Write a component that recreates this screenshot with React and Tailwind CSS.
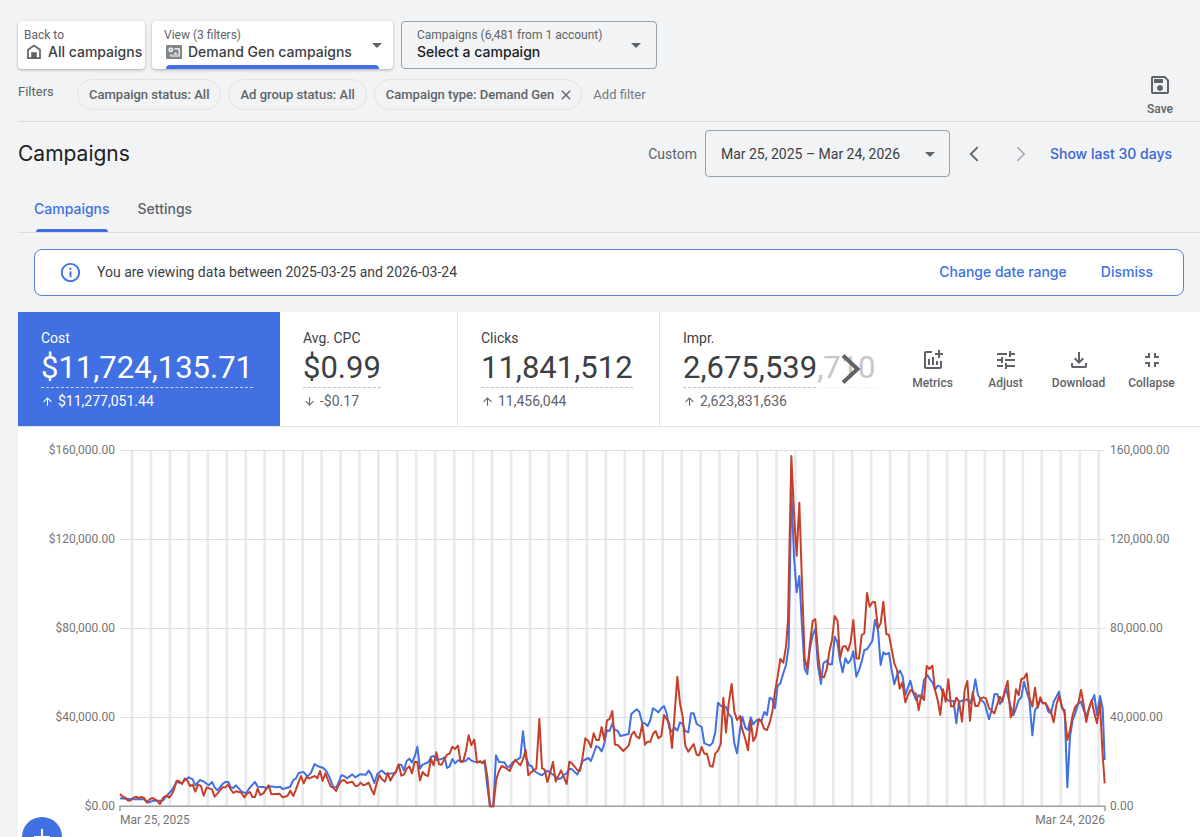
import {useState} from "react";
import {
    MdAddchart, MdArrowBackIosNew, MdArrowDownward, MdArrowDropDown, MdArrowForwardIos,
    MdArrowUpward, MdClose, MdFullscreenExit, MdInfoOutline, MdOutlineSave, MdTune
} from "react-icons/md";

const filters = [
    {label: "Campaign status: All", removable: false},
    {label: "Ad group status: All", removable: false},
    {label: "Campaign type: Demand Gen", removable: true},
];

const leftAxis = ["$160,000.00", "$120,000.00", "$80,000.00", "$40,000.00", "$0.00"];
const rightAxis = ["160,000.00", "120,000.00", "80,000.00", "40,000.00", "0.00"];

// plot space is 2955 x 1068, y grows downwards from the 160,000 line
const costLine = `0,1045 40,1048 72,1048 85,1058 100,1052 128,1052 140,1038 156,1020 170,996 185,1000 195,990 206,982 218,988 226,1006
240,990 252,995 266,1006 276,996 284,1012 292,1021 308,1002 316,996 325,996 332,1012 340,1014 348,1006 364,1024 378,1030 390,1012
405,996 413,1010 430,1011 440,1014 452,1009 470,1012 480,1010 488,1017 510,1011 520,990 528,985 536,969 551,966 562,980 572,970
584,942 592,948 610,954 620,965 630,985 640,1012 650,1011 664,976 672,978 681,985 697,973 706,982 720,973 738,974 746,962 754,974
763,999 772,972 780,965 786,962 796,972 820,970 828,965 836,944 844,944 852,961 860,933 868,926 876,937 884,920 892,890 900,956
908,944 926,936 933,920 941,918 950,930 965,927 974,922 981,954 989,949 997,927 1005,940 1014,931 1030,935 1038,932 1046,924
1054,932 1063,935 1088,937 1094,937 1102,1010 1110,1069 1120,1069 1128,916 1137,936 1153,937 1161,950 1169,950 1177,938 1193,928
1201,923 1209,844 1217,920 1227,946 1235,948 1242,963 1258,972 1266,976 1282,962 1300,975 1315,987 1323,985 1331,975 1340,970
1348,956 1356,958 1372,974 1380,955 1388,933 1405,924 1413,933 1429,888 1437,893 1445,904 1453,880 1461,840 1469,843 1477,820
1485,840 1493,842 1501,858 1526,852 1534,792 1550,778 1558,785 1567,820 1575,820 1583,828 1591,810 1599,775 1607,780 1615,787
1624,775 1632,768 1640,790 1648,835 1656,845 1664,833 1672,842 1680,817 1688,822 1696,843 1705,847 1713,790 1721,790 1730,822
1745,831 1753,880 1770,887 1778,878 1786,845 1794,758 1802,767 1818,771 1826,792 1835,802 1843,880 1851,910 1860,840 1867,800
1876,833 1884,840 1892,802 1900,823 1910,810 1924,814 1933,786 1941,795 1949,743 1957,748 1965,775 1973,707 1981,700 1990,670
1998,645 2006,590 2014,120 2022,320 2030,427 2038,378 2046,530 2054,657 2062,672 2070,595 2078,555 2086,536 2094,650 2103,702
2110,640 2120,632 2128,643 2136,643 2144,560 2152,576 2160,630 2168,667 2176,625 2184,640 2192,630 2200,604 2209,680 2217,660
2225,635 2233,600 2241,598 2257,573 2265,510 2274,540 2282,645 2290,607 2298,613 2307,609 2315,660 2323,703 2331,675 2340,662
2348,680 2356,735 2371,692 2380,730 2388,750 2396,735 2404,745 2412,690 2422,675 2430,688 2438,698 2445,720 2453,707 2461,710
2469,730 2485,752 2501,753 2509,820 2517,755 2542,748 2550,760 2558,740 2566,688 2574,735 2582,748 2594,760 2607,808 2615,780
2623,733 2632,732 2640,762 2647,750 2658,715 2672,770 2680,796 2688,775 2696,750 2704,742 2712,695 2720,725 2728,750 2737,856
2745,780 2753,770 2761,750 2769,760 2777,760 2785,785 2793,790 2801,755 2817,725 2826,775 2834,780 2842,1012 2850,860 2858,810
2866,790 2875,760 2883,755 2891,780 2899,800 2907,775 2923,735 2931,795 2940,738 2948,775 2954,930`;

const clicksLine = `0,1032 8,1040 16,1043 24,1052 32,1051 40,1043 48,1040 56,1044 64,1041 72,1043 80,1057 88,1049 96,1044 104,1047 112,1053
120,1062 130,1042 140,1037 148,1043 156,1032 162,1018 170,992 178,994 186,1002 194,986 202,991 210,1008 218,1004 226,1025
234,1004 243,1008 251,1037 260,1012 276,1018 284,1040 292,1031 308,1012 316,1012 324,1004 332,1018 340,1029 348,1024 364,1028
373,1042 381,1031 390,1026 397,1041 405,1041 413,1016 421,1035 430,1030 446,1006 454,1033 478,1031 488,1042 502,1038 511,1022
520,1038 528,1018 536,996 543,978 551,1000 559,982 568,985 584,978 592,985 600,963 608,993 616,970 624,990 632,1010 640,1013
648,1023 656,1005 664,993 672,990 681,999 697,995 706,1008 714,1007 722,998 730,1006 738,1003 746,998 754,1018 762,1033
770,1000 778,975 786,988 795,995 803,969 811,992 819,977 827,968 836,943 844,977 852,974 860,956 868,949 876,970 884,935
892,936 900,991 908,966 916,975 924,978 933,927 941,946 949,907 957,943 965,944 973,928 981,914 989,911 997,890 1005,897
1014,887 1022,936 1030,933 1038,902 1046,856 1054,886 1063,869 1071,938 1080,933 1088,940 1094,931 1102,980 1110,1069
1120,1069 1129,988 1137,963 1145,948 1161,956 1169,963 1177,945 1185,930 1193,938 1201,946 1209,928 1217,900 1225,976
1233,967 1249,956 1258,807 1266,955 1274,959 1282,996 1290,970 1299,936 1307,995 1323,961 1331,980 1340,1002 1348,935
1356,940 1372,960 1380,963 1388,920 1396,865 1405,873 1413,892 1421,850 1429,870 1437,870 1445,831 1453,870 1461,811
1469,807 1477,783 1485,884 1493,885 1510,903 1526,887 1534,855 1542,845 1550,860 1558,865 1567,823 1575,884 1583,875
1591,875 1599,852 1607,843 1615,865 1624,858 1632,795 1648,820 1656,894 1664,790 1672,680 1680,760 1688,800 1696,888
1705,905 1721,882 1730,914 1737,916 1745,891 1753,911 1761,911 1770,948 1778,950 1786,910 1794,902 1802,882 1810,743
1818,847 1826,760 1835,702 1843,785 1851,810 1860,798 1866,835 1876,868 1884,901 1892,812 1900,873 1908,858 1916,807
1924,814 1932,836 1941,840 1949,818 1957,785 1965,725 1973,680 1981,627 1990,638 1998,590 2004,510 2014,18 2022,190
2030,317 2038,158 2046,400 2054,625 2062,658 2070,580 2078,513 2086,507 2094,610 2102,680 2112,682 2120,658 2128,605
2136,570 2144,498 2153,514 2160,626 2168,590 2176,588 2184,602 2192,575 2200,510 2209,625 2217,626 2225,555 2233,550
2241,429 2249,470 2257,457 2265,456 2274,535 2282,520 2290,455 2299,552 2307,555 2323,640 2331,660 2339,716 2347,697
2356,757 2364,735 2372,720 2388,732 2396,780 2404,735 2412,750 2420,648 2428,657 2437,647 2445,720 2453,750 2461,795
2469,718 2477,755 2485,688 2493,769 2501,769 2509,743 2517,755 2526,815 2534,720 2542,693 2550,812 2558,727 2566,768
2574,768 2582,745 2590,742 2598,745 2607,775 2623,790 2631,765 2640,740 2647,755 2655,720 2663,693 2672,802 2680,785
2688,718 2696,735 2704,687 2712,685 2720,670 2728,740 2737,770 2745,713 2753,773 2761,742 2769,760 2777,760 2785,775
2793,785 2801,817 2809,765 2817,738 2826,770 2834,790 2842,870 2850,840 2858,795 2866,770 2875,760 2883,720 2891,765
2899,816 2907,775 2915,750 2923,790 2931,820 2940,758 2947,900 2954,1000`;

function HomeIcon() {
    return (
        <svg className="w-4 h-4 shrink-0" viewBox="0 0 16 16" fill="none">
            <path d="M2 14.2V5.8L8 1.6l6 4.2v8.4z" stroke="#5f6368" strokeWidth="1.7"/>
            <path d="M5.2 8.2h5.6v6H5.2z" fill="#5f6368"/>
        </svg>
    );
}

function DemandGenIcon() {
    return (
        <svg className="w-4 h-[14px] shrink-0" viewBox="0 0 16 14" fill="none">
            <rect width="16" height="14" rx="1" fill="#80868b"/>
            <circle cx="4.8" cy="4.8" r="1.7" stroke="#fff" strokeWidth="1.4"/>
            <path d="M8.2 3.8h5v7.2H5V9.2" stroke="#fff" strokeWidth="1.2"/>
            <path d="M7.5 9.6l2-2.4 2.3 2.4z" fill="#fff"/>
        </svg>
    );
}

function DownloadIcon() {
    return (
        <svg className="w-6 h-6" viewBox="0 0 24 24" fill="currentColor">
            <path d="M12 16l-5-5 1.4-1.45 2.6 2.6V4h2v8.15l2.6-2.6L17 11zM6 20q-.83 0-1.41-.59Q4 18.83 4 18v-3h2v3h12v-3h2v3q0 .83-.59 1.41Q18.83 20 18 20z"/>
        </svg>
    );
}

function Metric({label, value, delta, down, selected, className, children}) {
    return (
        <div className={`relative shrink-0 h-full px-[23px] pt-4 ${selected ? "bg-[#4070e2] text-white" : "text-[#3c4043]"} ${className}`}>
            <p className="text-sm leading-5">{label}</p>
            <p className={`w-fit text-[31px] leading-[39px] border-b border-dashed ${selected ? "border-white/70" : "border-[#bdc1c6]"}`}>{value}</p>
            <p className={`flex items-center gap-1 mt-[3px] text-sm leading-5 ${selected ? "" : "text-[#5f6368]"}`}>
                {down ? <MdArrowDownward size={13}/> : <MdArrowUpward size={13}/>}
                {delta}
            </p>
            {children}
        </div>
    );
}

function Tool({icon, label}) {
    return (
        <button className="flex flex-col items-center gap-[3px] w-[73px] pt-px text-[12px] leading-4 font-medium text-[#5f6368] cursor-pointer">
            {icon}
            {label}
        </button>
    );
}

function Chart() {
    const weeks = Array.from({length: 52}, (_, i) => 32 + i * 56.86);

    return (
        <div className="pt-[15px] text-[12px] leading-4 text-[#757575]">
            <div className="flex h-[372px]">
                <div className="flex flex-col justify-between items-end w-[97px] mr-[5px] shrink-0">
                    {leftAxis.map((tick) => <span key={tick}>{tick}</span>)}
                </div>
                <svg className="flex-1 min-w-0 h-[356px] mt-2 overflow-visible" viewBox="0 0 2955 1068" preserveAspectRatio="none" fill="none">
                    {weeks.map((x) => <rect key={x} x={x} y="0" width="8" height="1068" fill="#e8eaee"/>)}
                    {[0, 267, 534, 801].map((y) => (
                        <rect key={y} x="0" y={y} width="2955" height="3" fill="#dcdee1"/>
                    ))}
                    <path d="M0 1083V1069H2955V1083" stroke="#9e9e9e" strokeWidth="1.5" vectorEffect="non-scaling-stroke"/>
                    <polyline points={costLine} stroke="#4070e2" strokeWidth="2" strokeLinejoin="round" vectorEffect="non-scaling-stroke"/>
                    <polyline points={clicksLine} stroke="#c5402a" strokeWidth="2" strokeLinejoin="round" vectorEffect="non-scaling-stroke"/>
                </svg>
                <div className="flex flex-col justify-between w-[90px] ml-[5px] shrink-0">
                    {rightAxis.map((tick) => <span key={tick}>{tick}</span>)}
                </div>
            </div>
            <div className="flex justify-between pl-[102px] pr-[95px] -mt-0.5">
                <span>Mar 25, 2025</span>
                <span>Mar 24, 2026</span>
            </div>
        </div>
    );
}

function App() {
    const [tab, setTab] = useState("Campaigns");
    const [showBanner, setShowBanner] = useState(true);

    return (
        <div className="relative flex flex-col h-screen overflow-hidden pl-[18px] bg-[#f1f3f4] font-['Roboto','Liberation_Sans',sans-serif] text-[#3c4043]">
            <header className="flex justify-between pt-[21px] border-b border-[#dadce0]">
                <div>
                    <div className="flex">
                        <button className="flex flex-col w-[127px] h-12 pl-1.5 pt-1.5 rounded-sm bg-white shadow-[0_1px_3px_rgba(60,64,67,0.4)] text-left cursor-pointer">
                            <span className="text-[12px] leading-4 text-[#5f6368]">Back to</span>
                            <span className="flex items-center gap-1.5 pl-0.5 font-['Inter',sans-serif] text-sm leading-[18px] font-medium whitespace-nowrap"><HomeIcon/>All campaigns</span>
                        </button>
                        <button className="relative flex justify-between w-[241px] h-12 ml-[7px] pl-3 pr-1 pt-1.5 rounded-sm bg-white shadow-[0_1px_3px_rgba(60,64,67,0.4)] text-left cursor-pointer">
                            <span>
                                <span className="block text-[12px] leading-4 text-[#5f6368]">View (3 filters)</span>
                                <span className="flex items-center gap-1.5 pl-0.5 font-['Inter',sans-serif] text-sm leading-[18px] font-medium whitespace-nowrap"><DemandGenIcon/>Demand Gen campaigns</span>
                            </span>
                            <MdArrowDropDown size={24} className="mt-1.5 text-[#5f6368]"/>
                            <span className="absolute left-3.5 right-3.5 bottom-0 h-1 rounded-t-sm bg-[#4070e2]"/>
                        </button>
                        <button className="flex justify-between w-[256px] h-12 ml-2 pl-[15px] pr-2 pt-[5px] rounded-sm border border-[#9aa0a6] text-left cursor-pointer">
                            <span>
                                <span className="block text-[12px] leading-4 text-[#5f6368]">Campaigns (6,481 from 1 account)</span>
                                <span className="block font-['Inter',sans-serif] text-sm leading-[18px] font-medium text-[#202124]">Select a campaign</span>
                            </span>
                            <MdArrowDropDown size={24} className="mt-1.5 text-[#5f6368]"/>
                        </button>
                    </div>
                    <div className="flex gap-[7px] mt-2.5 pb-[11px] text-[13px] text-[#5f6368]">
                        <span className="w-[52px] pt-[3px] leading-5">Filters</span>
                        {filters.map((filter) => (
                            <button key={filter.label} className="flex items-center gap-1 h-[31px] px-[11px] rounded-full border border-[#e0e2e5] font-medium whitespace-nowrap cursor-pointer">
                                {filter.label}
                                {filter.removable && <MdClose size={16} className="-mr-1"/>}
                            </button>
                        ))}
                        <button className="ml-1 cursor-pointer text-[#757a7f]">Add filter</button>
                    </div>
                </div>
                <button className="flex flex-col items-center gap-1 self-end w-12 mr-4 pb-1 text-[12px] leading-4 font-medium text-[#5f6368] cursor-pointer">
                    <MdOutlineSave size={24}/>
                    Save
                </button>
            </header>

            <div className="flex items-center py-2 pr-7">
                <h1 className="mr-auto font-['Inter',sans-serif] text-[21px] leading-7 text-[#202124]">Campaigns</h1>
                <span className="text-sm text-[#5f6368]">Custom</span>
                <button className="flex items-center justify-between w-[245px] h-[47px] ml-2 pl-[15px] pr-[7px] rounded-sm border border-[#9aa0a6] text-sm cursor-pointer">
                    Mar 25, 2025 – Mar 24, 2026
                    <MdArrowDropDown size={24} className="text-[#5f6368]"/>
                </button>
                <button aria-label="Previous period" className="ml-[15px] text-[#5f6368] cursor-pointer"><MdArrowBackIosNew size={18}/></button>
                <button aria-label="Next period" disabled className="ml-[29px] text-[#b0b4b8]"><MdArrowForwardIos size={18}/></button>
                <button className="ml-5 font-['Inter',sans-serif] text-sm font-medium text-[#3a63d6] cursor-pointer">Show last 30 days</button>
            </div>

            <div className="flex gap-7 pl-4 border-b border-[#dadce0]" role="tablist">
                {["Campaigns", "Settings"].map((name) => (
                    <button
                        key={name}
                        role="tab"
                        aria-selected={tab === name}
                        onClick={() => setTab(name)}
                        className={`relative h-[47px] font-['Inter',sans-serif] text-sm font-medium cursor-pointer ${tab === name ? "text-[#4070e2]" : "text-[#5f6368]"}`}>
                        {name}
                        {tab === name && <span className="absolute inset-x-0.5 bottom-0 h-[3px] rounded-t-sm bg-[#4070e2]"/>}
                    </button>
                ))}
            </div>

            {showBanner && (
                <div className="flex items-center h-[47px] mt-4 ml-4 mr-4 pl-6 pr-[30px] pb-px rounded-lg border border-[#5a80dc] bg-white shrink-0">
                    <MdInfoOutline size={23} className="text-[#4070e2]"/>
                    <p className="ml-[15px] mr-auto text-sm">You are viewing data between 2025-03-25 and 2026-03-24</p>
                    <button className="font-['Inter',sans-serif] text-sm font-medium text-[#4070e2] cursor-pointer">Change date range</button>
                    <button className="ml-[34px] font-['Inter',sans-serif] text-sm font-medium text-[#4070e2] cursor-pointer" onClick={() => setShowBanner(false)}>Dismiss</button>
                </div>
            )}

            <main className="flex-1 mt-4 bg-white">
                <div className="flex items-center h-[115px] border-b border-[#e0e2e5]">
                    <Metric label="Cost" value="$11,724,135.71" delta="$11,277,051.44" selected className="w-[262px]"/>
                    <Metric label="Avg. CPC" value="$0.99" delta="-$0.17" down className="w-[178px] border-r border-[#e0e2e5]"/>
                    <Metric label="Clicks" value="11,841,512" delta="11,456,044" className="w-[202px] border-r border-[#e0e2e5]"/>
                    <Metric label="Impr." value="2,675,539,710" delta="2,623,831,636" className="w-[230px]">
                        <button aria-label="More metrics" className="absolute inset-y-0 left-[158px] flex items-center justify-center w-[66px] bg-white/70 text-[#5f6368] cursor-pointer">
                            <svg className="w-5 h-[30px]" viewBox="0 0 20 30" fill="none">
                                <path d="M2 1.5L16.5 15L2 28.5" stroke="currentColor" strokeWidth="4"/>
                            </svg>
                        </button>
                    </Metric>
                    <div className="flex ml-auto mr-3">
                        <Tool icon={<MdAddchart size={24}/>} label="Metrics"/>
                        <Tool icon={<MdTune size={24}/>} label="Adjust"/>
                        <Tool icon={<DownloadIcon/>} label="Download"/>
                        <Tool icon={<MdFullscreenExit size={24}/>} label="Collapse"/>
                    </div>
                </div>
                <Chart/>
            </main>

            <button aria-label="Create campaign" className="absolute left-[22px] -bottom-5 flex items-center justify-center w-10 h-10 rounded-full bg-[#4070e2] text-white shadow-md cursor-pointer">
                <svg className="w-4 h-4" viewBox="0 0 16 16" fill="none">
                    <path d="M8 0v16M0 8h16" stroke="currentColor" strokeWidth="2"/>
                </svg>
            </button>
        </div>
    );
}

export default App;
